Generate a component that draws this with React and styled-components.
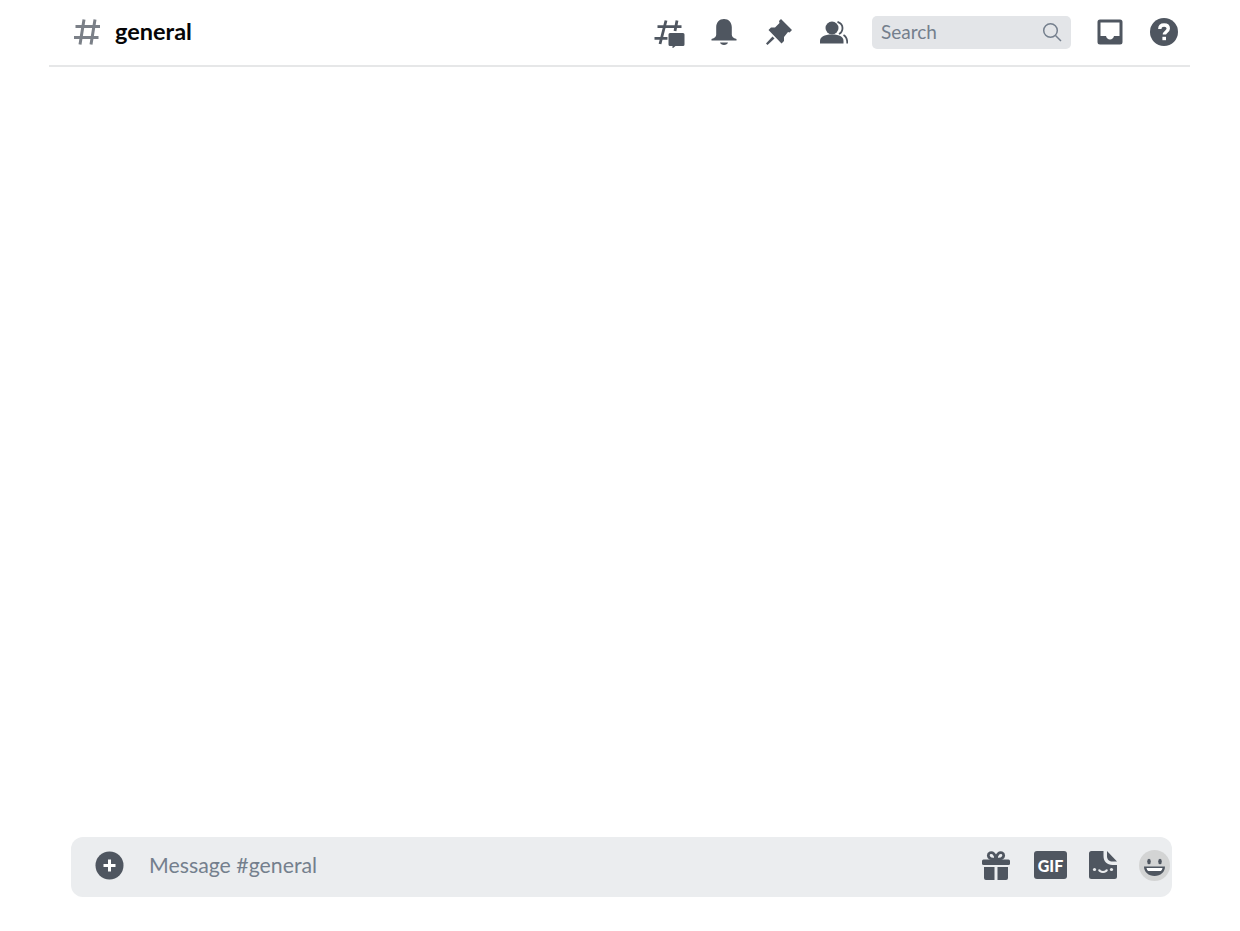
import React from 'react';
import styled, { createGlobalStyle } from 'styled-components';

const GlobalStyle = createGlobalStyle`
  html, body {
    margin: 0;
    padding: 0;
    background: #ffffff;
  }
  * { box-sizing: border-box; }
`;

const Page = styled.div`
  width: 1240px;
  height: 931px;
  display: flex;
  flex-direction: column;
  background: #ffffff;
  font-family: Lato, "Open Sans", sans-serif;
  overflow: hidden;
`;

const Header = styled.header`
  height: 67px;
  margin: 0 50px 0 49px;
  padding: 0 10px 1px 24px;
  display: flex;
  align-items: center;
  border-bottom: 2px solid #e6e7e8;
`;

const ChannelTitle = styled.div`
  display: flex;
  align-items: center;
  gap: 14px;
  flex: 1;
`;

const ChannelName = styled.h1`
  margin: 0 0 3px;
  font-size: 23.5px;
  font-weight: 700;
  color: #060607;
  line-height: 28px;
`;

const Toolbar = styled.div`
  display: flex;
  align-items: center;
  gap: 22.5px;
`;

const IconSlot = styled.div`
  width: 32px;
  height: 32px;
  display: flex;
  align-items: center;
  justify-content: center;
  color: #4f5660;
`;

const SearchBox = styled.div`
  width: 199px;
  height: 33px;
  padding: 0 9px;
  display: flex;
  align-items: center;
  justify-content: space-between;
  background: #e3e5e8;
  border-radius: 5px;
  color: #747f8d;
  font-size: 19px;
`;

const SearchLabel = styled.span`
  margin-bottom: 2px;
`;

const Main = styled.main`
  flex: 1;
`;

const Composer = styled.div`
  height: 60px;
  margin: 0 68px 34px 71px;
  padding: 0 2px 4px 24px;
  display: flex;
  align-items: center;
  background: #ebedef;
  border-radius: 12px;
`;

const Placeholder = styled.div`
  flex: 1;
  margin-left: 25px;
  font-size: 21.3px;
  color: #747f8d;
`;

const ComposerActions = styled.div`
  display: flex;
  align-items: center;
  gap: 22px;
`;

const GiftSlot = styled.div`
  display: flex;
  margin-right: 2px;
`;

const GifBadge = styled.div`
  width: 33px;
  height: 28px;
  display: flex;
  align-items: center;
  justify-content: center;
  background: #4f5660;
  border-radius: 3px;
  color: #ffffff;
  font-size: 16px;
  font-weight: 900;
`;

const HashIcon = () => (
  <svg width="28" height="28" viewBox="0 0 28 28" fill="none" stroke="#7b8088" strokeWidth="3">
    <path d="M11 1.500 7 26.500M22 1.500 18 26.500M2.500 8.500H27M1 19.500H25.500" />
  </svg>
);

const ThreadsIcon = () => (
  <svg width="32" height="32" viewBox="0 0 32 32" fill="none">
    <path d="M12 4.500 6 28M23 4.500 21 15M3.500 10.700H27.500M.5 22.300H13.500" stroke="currentColor" strokeWidth="2.800" />
    <path d="M16 17h13a1.500 1.500 0 0 1 1.500 1.500v10a1.500 1.500 0 0 1-1.500 1.500h-7.500l-3 2.500V30H16a1.500 1.500 0 0 1-1.500-1.500v-10A1.500 1.500 0 0 1 16 17Z" fill="currentColor" />
  </svg>
);

const BellIcon = () => (
  <svg width="28" height="28" viewBox="1 0 28 28" fill="currentColor">
    <path d="M14 1c-4.600 0-7.800 3.400-7.800 8.200v7.600c0 1.600-1.400 3.400-4.700 4.200v1.600h25v-1.600c-3.300-.8-4.700-2.600-4.700-4.200V9.200C21.800 4.400 18.600 1 14 1Z" />
    <path d="M10 24.500h8c-.4 1.600-2 2.500-4 2.500s-3.600-.9-4-2.500Z" />
  </svg>
);

const PinIcon = () => (
  <svg width="28" height="28" viewBox="0 0 28 28" fill="currentColor">
    <path d="M16 1 27 12l-2.500 2.500L23 14l-4 5v4l-2.500 2.500L3.500 12 6 9.500h4L14.500 5 14 3l2-2Z" />
    <path d="m7.500 18.500 2 2L2.500 27 1 25.500l6.500-7Z" />
  </svg>
);

const PeopleIcon = () => (
  <svg width="28" height="23" viewBox="0 0 28 23" fill="currentColor">
    <circle cx="12" cy="7" r="6.500" />
    <path d="M0 22.500V20c0-4 4-6.500 12-6.500s11.500 2.500 11.500 6.500v2.500H0Z" />
    <path d="M17.500.8c3 1 5 3.500 5 6.200s-1.500 5-3.500 6M23.500 14c2.800 1.500 3.800 4 3.800 8.500" fill="none" stroke="currentColor" strokeWidth="1.800" />
  </svg>
);

const SearchIcon = () => (
  <svg width="20" height="20" viewBox="0 0 20 20" fill="none" stroke="#747f8d" strokeWidth="1.500">
    <circle cx="8.500" cy="8.500" r="6.800" />
    <path d="m13.500 13.500 5.500 5.500" />
  </svg>
);

const InboxIcon = () => (
  <svg width="26" height="26" viewBox="0 0 26 26" fill="currentColor">
    <path fillRule="evenodd" d="M3 .5h20A2.500 2.500 0 0 1 25.500 3v20a2.500 2.500 0 0 1-2.500 2.500H3A2.500 2.500 0 0 1 .5 23V3A2.500 2.500 0 0 1 3 .5Zm.5 3v13.500h5.500c.5 2.300 2 3.500 4 3.500s3.500-1.200 4-3.500h5.500V3.500h-19Z" />
  </svg>
);

const HelpIcon = () => (
  <svg width="28" height="28" viewBox="0 0 28 28">
    <circle cx="14" cy="14" r="14" fill="currentColor" />
    <path d="M9.800 11c0-2.500 1.800-4 4.300-4s4.200 1.400 4.200 3.600c0 3-3.900 3.200-3.900 6" fill="none" stroke="#ffffff" strokeWidth="3.400" />
    <rect x="12.400" y="18.800" width="3.600" height="3.400" fill="#ffffff" />
  </svg>
);

const PlusIcon = () => (
  <svg width="29" height="29" viewBox="0 0 29 29">
    <circle cx="14.500" cy="14.500" r="14" fill="#4f5660" />
    <path d="M14.500 8.500v12M8.500 14.500h12" stroke="#ffffff" strokeWidth="3" />
  </svg>
);

const GiftIcon = () => (
  <svg width="28" height="29" viewBox="0 0 28 29" fill="#4f5660">
    <rect x="0" y="8.500" width="28" height="5.500" rx="1.500" />
    <path d="M2 16h10.500v13H4a2 2 0 0 1-2-2V16ZM15.500 16H26v11a2 2 0 0 1-2 2h-8.500V16Z" />
    <path d="M14 8.500C10.500 8.500 6.500 7.500 6.300 4.700 6.200 1.800 9.500.6 11.600 2.500 13 3.700 13.700 6 14 8.500c.3-2.500 1-4.800 2.400-6C18.500.6 21.800 1.800 21.700 4.700 21.500 7.500 17.500 8.500 14 8.500Z" fill="none" stroke="#4f5660" strokeWidth="2.800" />
  </svg>
);

const StickerIcon = () => (
  <svg width="28" height="28" viewBox="0 0 28 28">
    <path d="M2.500 0H14.500v5c0 5.500 3.500 9 9 9H28v11.500a2.500 2.500 0 0 1-2.500 2.500h-23A2.500 2.500 0 0 1 0 25.500v-23A2.500 2.500 0 0 1 2.500 0Z" fill="#4f5660" />
    <path d="M18 0 28 10.500H23.500c-3 0-5.500-2-5.500-5V0Z" fill="#4f5660" />
    <circle cx="5.500" cy="18.500" r="1.600" fill="#ebedef" />
    <circle cx="22.500" cy="18.500" r="1.600" fill="#ebedef" />
    <path d="M10 18.500c.8 3.200 7.200 3.200 8 0" fill="none" stroke="#ebedef" strokeWidth="2" />
  </svg>
);

const EmojiIcon = () => (
  <svg width="31" height="31" viewBox="0 0 31 31">
    <circle cx="15.500" cy="15.500" r="15.500" fill="#d3d4d4" />
    <ellipse cx="10" cy="11.500" rx="1.800" ry="2.800" fill="#4f5660" />
    <ellipse cx="21" cy="11.500" rx="1.800" ry="2.800" fill="#4f5660" />
    <path d="M5 16.500h21c0 5.500-4.500 9.500-10.500 9.500S5 22 5 16.500Z" fill="#4f5660" />
    <path d="M7.500 18h16c-.3 1.500-1 2.500-1.800 3H9.300c-.8-.5-1.500-1.500-1.800-3Z" fill="#ffffff" />
  </svg>
);

const App = () => (
  <Page>
    <GlobalStyle />
    <Header>
      <ChannelTitle>
        <HashIcon />
        <ChannelName>general</ChannelName>
      </ChannelTitle>
      <Toolbar>
        <IconSlot><ThreadsIcon /></IconSlot>
        <IconSlot><BellIcon /></IconSlot>
        <IconSlot><PinIcon /></IconSlot>
        <IconSlot><PeopleIcon /></IconSlot>
        <SearchBox>
          <SearchLabel>Search</SearchLabel>
          <SearchIcon />
        </SearchBox>
        <IconSlot><InboxIcon /></IconSlot>
        <IconSlot><HelpIcon /></IconSlot>
      </Toolbar>
    </Header>
    <Main />
    <Composer>
      <PlusIcon />
      <Placeholder>Message #general</Placeholder>
      <ComposerActions>
        <GiftSlot><GiftIcon /></GiftSlot>
        <GifBadge>GIF</GifBadge>
        <StickerIcon />
        <EmojiIcon />
      </ComposerActions>
    </Composer>
  </Page>
);

export default App;
